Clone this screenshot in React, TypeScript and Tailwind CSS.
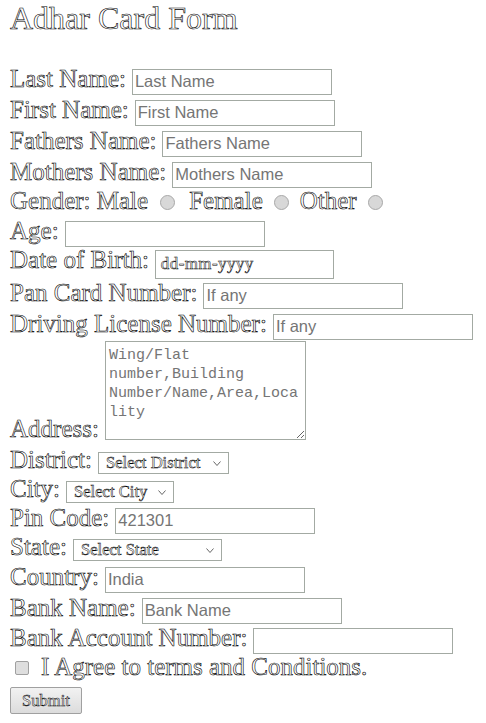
import React from "react";

const ol = "text-white [-webkit-text-stroke:0.6px_#000]";
const olSmall = "text-white [-webkit-text-stroke:0.5px_#000]";
const labelCls = "text-[25px] leading-[25px] whitespace-nowrap " + ol;
const inputCls =
  "h-[26px] w-[200px] shrink-0 border border-[#a3aaa3] bg-white px-[2px] font-['Liberation_Sans',sans-serif] text-[16.5px] leading-[19px] text-black placeholder:text-[#757575] outline-none";
const boxCls = "shrink-0 border border-[#a3aaa3] bg-white";

function Row({ h, label, children }: { h: string; label: string; children?: React.ReactNode }) {
  return (
    <div className={"flex items-baseline gap-[6px] " + h}>
      <span className={labelCls}>{label}</span>
      {children}
    </div>
  );
}

function Chevron() {
  return (
    <svg width="8" height="5" viewBox="0 0 8 5" className="shrink-0">
      <polyline points="0.5,0.5 4,4.5 7.5,0.5" fill="none" stroke="#666" strokeWidth="1" />
    </svg>
  );
}

function FakeSelect({ w, text }: { w: string; text: string }) {
  return (
    <div className={"flex h-[22px] items-center justify-between pl-[7px] pr-[7px] text-[16.6px] leading-[20px] " + boxCls + " " + w}>
      <span className={"whitespace-nowrap " + olSmall}>{text}</span>
      <Chevron />
    </div>
  );
}

function Radio() {
  return (
    <span className="inline-block h-[15px] w-[15px] shrink-0 translate-y-[1px] rounded-full border border-[#a8a8a8] bg-[#d8d8d8]" />
  );
}

export default function App() {
  return (
    <div className="min-h-screen w-full bg-white pl-[10px] font-['Liberation_Serif',serif] text-black">
      <div className="h-[66px] pt-[2px]">
        <h2 className={"text-[32px] leading-[32px] whitespace-nowrap " + ol}>Adhar Card Form</h2>
      </div>

      <Row h="h-[31px]" label="Last Name:">
        <input className={inputCls} placeholder="Last Name" />
      </Row>
      <Row h="h-[31px]" label="First Name:">
        <input className={inputCls} placeholder="First Name" />
      </Row>
      <Row h="h-[31px]" label="Fathers Name:">
        <input className={inputCls} placeholder="Fathers Name" />
      </Row>
      <Row h="h-[29px]" label="Mothers Name:">
        <input className={inputCls} placeholder="Mothers Name" />
      </Row>

      <div className="flex h-[30px] items-baseline">
        <span className={labelCls}>Gender: Male</span>
        <span className="ml-[12px]">
          <Radio />
        </span>
        <span className={"ml-[14px] " + labelCls}>Female</span>
        <span className="ml-[11px]">
          <Radio />
        </span>
        <span className={"ml-[11px] " + labelCls}>Other</span>
        <span className="ml-[11px]">
          <Radio />
        </span>
      </div>

      <Row h="h-[29px]" label="Age:">
        <input className={inputCls} />
      </Row>
      <Row h="h-[33px]" label="Date of Birth:">
        <div className={"h-[29px] w-[179px] translate-y-[1px] pl-[5px] pt-[3px] text-[17px] leading-[19px] tracking-[0.4px] " + boxCls}>
          <span className={"whitespace-nowrap " + olSmall}>dd-mm-yyyy</span>
        </div>
      </Row>
      <Row h="h-[31px]" label="Pan Card Number:">
        <input className={inputCls} placeholder="If any" />
      </Row>
      <Row h="h-[29px]" label="Driving License Number:">
        <input className={inputCls} placeholder="If any" />
      </Row>

      <div className="flex h-[107px] items-end gap-[6px] pb-[7px]">
        <span className={"-mb-px " + labelCls}>Address:</span>
        <textarea
          className="h-[99px] w-[201px] shrink-0 overflow-hidden border border-[#a3aaa3] bg-white px-[3px] pt-[4px] font-['Liberation_Mono',monospace] text-[15px] leading-[19px] text-black placeholder:text-[#757575] outline-none"
          placeholder="Wing/Flat number,Building Number/Name,Area,Locality"
        />
      </div>

      <Row h="h-[29px]" label="District:">
        <FakeSelect w="w-[131px]" text="Select District" />
      </Row>
      <Row h="h-[29px]" label="City:">
        <FakeSelect w="w-[108px]" text="Select City" />
      </Row>
      <Row h="h-[29px]" label="Pin Code:">
        <input className={inputCls} placeholder="421301" />
      </Row>
      <Row h="h-[30px]" label="State:">
        <FakeSelect w="w-[149px]" text="Select State" />
      </Row>
      <Row h="h-[31px]" label="Country:">
        <input className={inputCls} placeholder="India" />
      </Row>
      <Row h="h-[30px]" label="Bank Name:">
        <input className={inputCls} placeholder="Bank Name" />
      </Row>
      <Row h="h-[29px]" label="Bank Account Number:">
        <input className={inputCls} />
      </Row>

      <div className="flex h-[33px] items-baseline">
        <span className="ml-[5px] inline-block h-[14px] w-[14px] shrink-0 rounded-[2px] border border-[#a0a0a0] bg-[#dedede]" />
        <span className={"ml-[12px] " + labelCls}>I Agree to terms and Conditions.</span>
      </div>

      <div>
        <button className="h-[27px] w-[72px] rounded-[2px] border border-[#a0a0a0] bg-linear-to-b from-[#f2f2f2] to-[#dcdcdc] text-[16.6px] leading-[20px]">
          <span className={olSmall}>Submit</span>
        </button>
      </div>
    </div>
  );
}
